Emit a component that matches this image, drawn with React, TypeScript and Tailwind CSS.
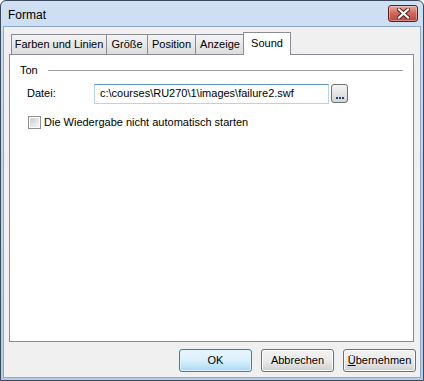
import React from "react";

const FONT = { fontFamily: '"Liberation Sans", Tahoma, sans-serif' };

const tabs = [
  { label: "Farben und Linien", w: "w-[96px]" },
  { label: "Größe", w: "w-[42px]" },
  { label: "Position", w: "w-[49px]" },
  { label: "Anzeige", w: "w-[50px]" },
];

function CloseButton() {
  return (
    <div className="w-[30px] h-[17px] rounded-[3px] border border-[#5b2020] bg-gradient-to-b from-[#e9a99b] via-[#d0665a] to-[#c0463c] flex items-center justify-center shadow-[inset_0_0_0_1px_rgba(255,255,255,0.35)]">
      <svg width="13" height="11" viewBox="0 0 13 11">
        <path
          d="M2 1.5 L11 9.5 M11 1.5 L2 9.5"
          stroke="#4a1a1a"
          strokeWidth="4"
          strokeLinecap="square"
        />
        <path
          d="M2 1.5 L11 9.5 M11 1.5 L2 9.5"
          stroke="#ffffff"
          strokeWidth="2.2"
          strokeLinecap="square"
        />
      </svg>
    </div>
  );
}

function DialogButton({
  children,
  primary,
}: {
  children: React.ReactNode;
  primary?: boolean;
}) {
  return (
    <button
      className={`w-[73px] h-[23px] rounded-[3px] border text-[11px] text-black flex items-center justify-center ${
        primary
          ? "border-[#3c7fb1] bg-gradient-to-b from-[#eaf6fd] via-[#d9f0fc] to-[#a7d9f5] shadow-[inset_0_0_0_1px_#e0f2fc]"
          : "border-[#707070] bg-gradient-to-b from-[#f2f2f2] via-[#ebebeb] to-[#cfcfcf] shadow-[inset_0_0_0_1px_#fcfcfc]"
      }`}
    >
      {children}
    </button>
  );
}

export default function App() {
  return (
    <div
      style={FONT}
      className="w-[424px] h-[381px] flex flex-col border border-[#3a4a5c] rounded-t-[6px] bg-gradient-to-b from-[#cfe0f3] via-[#bdd3eb] to-[#b4cce8] overflow-hidden"
    >
      {/* title bar */}
      <div className="h-[25px] flex items-center justify-between pl-[7px] pr-[5px] shrink-0">
        <span className="text-[12px] text-black mt-[2px]">Format</span>
        <CloseButton />
      </div>

      {/* client area */}
      <div className="flex-1 mx-[2px] mb-[2px] bg-[#f0f0f0] border border-[#8fa8c6] flex flex-col pl-[5px] pr-[6px] pt-[4px]">
        {/* tab strip */}
        <div className="flex items-end h-[23px] pl-[2px] relative z-10 text-[11px] text-black">
          {tabs.map((t) => (
            <div
              key={t.label}
              className={`${t.w} h-[20px] -mr-[1px] border border-[#898c95] border-b-0 bg-gradient-to-b from-[#f3f3f3] to-[#dcdcdc] flex items-center justify-center`}
            >
              {t.label}
            </div>
          ))}
          <div className="w-[48px] h-[23px] -ml-[1px] -mb-[1px] border border-[#898c95] border-b-0 bg-white flex items-center justify-center pb-[2px]">
            Sound
          </div>
        </div>

        {/* panel */}
        <div className="h-[288px] border border-[#898c95] bg-white pt-[8px] pl-[10px] pr-[10px] text-[11px] text-black">
          <div className="flex items-center gap-[10px] h-[14px]">
            <span>Ton</span>
            <div className="flex-1 h-px bg-[#a0a0a0]" />
          </div>

          <div className="flex items-center mt-[6px] pl-[7px] h-[21px]">
            <span className="w-[67px]">Datei:</span>
            <div className="w-[235px] h-[20px] border border-[#b7d3ec] border-t-[#5b94c5] flex items-center pl-[5px] text-[11px]">
              c:\courses\RU270\1\images\failure2.swf
            </div>
            <div className="ml-[2px] w-[17px] h-[19px] rounded-[3px] border border-[#707070] bg-gradient-to-b from-[#f4f4f4] to-[#d5d5d5] flex items-end justify-center pb-[3px]">
              <div className="flex gap-[1px]">
                <div className="w-[2px] h-[2px] bg-[#2c3c80]" />
                <div className="w-[2px] h-[2px] bg-[#2c3c80]" />
                <div className="w-[2px] h-[2px] bg-[#2c3c80]" />
              </div>
            </div>
          </div>

          <div className="flex items-center mt-[10px] pl-[8px] gap-[3px]">
            <div className="w-[13px] h-[13px] border border-[#8e8f8f] bg-white p-[1px]">
              <div className="w-full h-full bg-gradient-to-br from-[#cbcfd5] to-[#f6f6f6]" />
            </div>
            <span>Die Wiedergabe nicht automatisch starten</span>
          </div>
        </div>

        {/* buttons */}
        <div className="flex justify-end gap-[9px] mt-[7px] -mr-[2px]">
          <DialogButton primary>OK</DialogButton>
          <DialogButton>Abbrechen</DialogButton>
          <DialogButton>
            <span>
              <span className="underline">Ü</span>bernehmen
            </span>
          </DialogButton>
        </div>
      </div>
    </div>
  );
}
